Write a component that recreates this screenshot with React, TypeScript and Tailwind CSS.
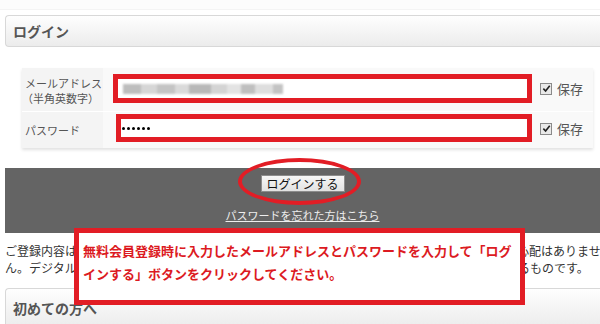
import React from "react";

const jp = { fontFamily: '"Noto Sans CJK JP", "Noto Sans", sans-serif' };

function Check() {
  return (
    <span className="w-[12px] h-[12px] border border-[#8a8a8a] bg-[#e9e9e9] flex items-center justify-center">
      <svg width="9" height="9" viewBox="0 0 10 10">
        <path d="M1.5 5.2 L4 7.8 L8.6 2" stroke="#222" strokeWidth="1.8" fill="none" />
      </svg>
    </span>
  );
}

export default function App() {
  return (
    <div className="relative w-[600px] h-[324px] overflow-hidden bg-white text-[#333]" style={jp}>
      <div className="h-[10px] border-b border-[#f4f4f4] flex">
        <div className="w-[480px] bg-[#fcfcfc]" />
      </div>
      <div className="mt-[5px] ml-[5px] h-[32px] rounded-l-[4px] border border-r-0 border-[#d8d8d8] bg-gradient-to-b from-[#fefefe] to-[#ececec] flex items-center pl-[7px]">
        <span className="text-[14px] font-bold text-[#555]">ログイン</span>
      </div>

      <div className="mt-[21px] ml-[22px] w-[571px] shadow-[0_2px_3px_rgba(0,0,0,0.12)]">
        <div className="flex h-[44px] border-b border-white">
          <div className="w-[81px] bg-[#f4f4f4] pl-[3px] pt-[8px] text-[11px] leading-[15px] text-[#555]">
            <div>メールアドレス</div>
            <div className="-ml-[3px]">（半角英数字）</div>
          </div>
          <div className="flex-1 bg-[#f9f9f9] flex items-start pt-[6px] pl-[10px]">
            <div className="w-[419px] h-[29px] border-[5px] border-[#e21d25] bg-white flex items-center pl-[5px]">
              <div className="flex blur-[1px] gap-0">
                <span className="w-[18px] h-[10px] bg-[#bdbdbd]" />
                <span className="w-[16px] h-[10px] bg-[#d6d6d6]" />
                <span className="w-[18px] h-[10px] bg-[#c4c4c4]" />
                <span className="w-[14px] h-[10px] bg-[#dadada]" />
                <span className="w-[22px] h-[10px] bg-[#b8b8b8]" />
                <span className="w-[16px] h-[10px] bg-[#d4d4d4]" />
                <span className="w-[14px] h-[10px] bg-[#e3e3e3]" />
                <span className="w-[14px] h-[10px] bg-[#bfbfbf]" />
                <span className="w-[18px] h-[10px] bg-[#dedede]" />
                <span className="w-[10px] h-[10px] bg-[#c3c3c3]" />
              </div>
            </div>
            <div className="ml-[8px] mt-[8px] flex items-center gap-[5px]">
              <Check />
              <span className="text-[13px] text-[#555] leading-none">保存</span>
            </div>
          </div>
        </div>
        <div className="flex h-[36px]">
          <div className="w-[81px] bg-[#f4f4f4] pl-[3px] flex items-center text-[11px] text-[#555]">パスワード</div>
          <div className="flex-1 bg-[#f9f9f9] flex items-start pt-[2px] pl-[13px]">
            <div className="w-[416px] h-[28px] border-[5px] border-[#e21d25] bg-white flex items-center pl-[1px] gap-[2px]">
              <span className="w-[3px] h-[3px] rounded-full bg-black" />
              <span className="w-[3px] h-[3px] rounded-full bg-black" />
              <span className="w-[3px] h-[3px] rounded-full bg-black" />
              <span className="w-[3px] h-[3px] rounded-full bg-black" />
              <span className="w-[3px] h-[3px] rounded-full bg-black" />
              <span className="w-[3px] h-[3px] rounded-full bg-black" />
            </div>
            <div className="ml-[8px] mt-[8px] flex items-center gap-[5px]">
              <Check />
              <span className="text-[13px] text-[#555] leading-none">保存</span>
            </div>
          </div>
        </div>
      </div>

      <div className="mt-[20px] ml-[5px] h-[65px] bg-[#646464] flex flex-col items-center pt-[7px]">
        <button className="w-[84px] h-[17px] border border-[#8c8c8c] bg-gradient-to-b from-[#f6f6f6] to-[#e2e2e2] text-[12px] leading-none text-[#111] flex items-center justify-center" style={jp}>
          ログインする
        </button>
        <span className="mt-[18px] text-[11px] leading-none text-[#eeeeee] underline">パスワードを忘れた方はこちら</span>
      </div>

      <div className="mt-[9px] ml-[5px] text-[12px] leading-[17px] whitespace-nowrap text-[#333]">
        <div className="flex">
          <span className="w-[512px] shrink-0">ご登録内容は</span>
          <span className="shrink-0">心配はありません</span>
        </div>
        <div className="flex">
          <span className="w-[513px] shrink-0">ん。デジタル</span>
          <span className="shrink-0">るものです。</span>
        </div>
      </div>

      <div className="mt-[12px] ml-[5px] h-[40px] rounded-l-[4px] border border-r-0 border-[#d8d8d8] bg-gradient-to-b from-[#fefefe] to-[#ececec] pl-[7px] pt-[6px]">
        <span className="text-[14px] font-bold text-[#555]">初めての方へ</span>
      </div>

      <div className="absolute left-[238px] top-[158px] w-[123px] h-[47px] rounded-[50%] border-[4px] border-[#e21d25]" />

      <div className="absolute left-[74px] top-[228px] w-[451px] h-[77px] border-[5px] border-[#e21d25] bg-white pl-[4px] pt-[6px] text-[13px] leading-[23px] font-bold text-[#dc1a22] whitespace-nowrap">
        <div>無料会員登録時に入力したメールアドレスとパスワードを入力して「ログ</div>
        <div>インする」ボタンをクリックしてください。</div>
      </div>
    </div>
  );
}
